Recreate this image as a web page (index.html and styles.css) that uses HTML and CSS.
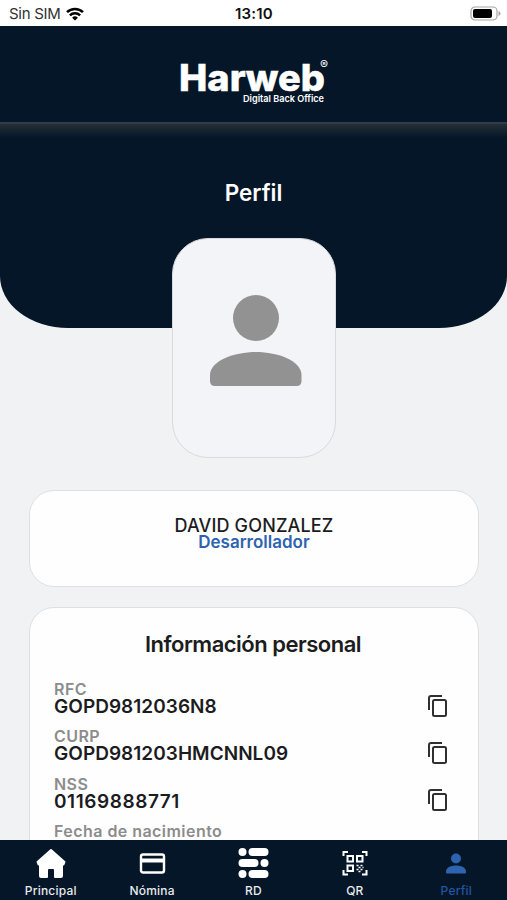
FILE: index.html
```
<!DOCTYPE html>
<html lang="es">
<head>
  <meta charset="UTF-8">
  <meta name="viewport" content="width=device-width, initial-scale=1.0">
  <title>Harweb - Perfil</title>
  <link rel="stylesheet" href="styles.css">
</head>
<body>
  <!-- Status bar -->
  <div class="status-bar">
    <div class="carrier">
      <span>Sin SIM</span>
      <svg class="wifi" viewBox="0 0 18 14" width="18" height="14">
        <g fill="none" stroke="#000" stroke-width="2.5">
          <path d="M1 5.2a11.3 11.3 0 0 1 16 0"/>
          <path d="M3.9 8.3a7.2 7.2 0 0 1 10.2 0"/>
        </g>
        <path d="M9 13.6 6.1 10.7a4.1 4.1 0 0 1 5.8 0z"/>
      </svg>
    </div>
    <span class="clock">13:10</span>
    <svg class="battery" viewBox="0 0 31 15" width="31" height="15">
      <rect x="1" y="1" width="26" height="13" rx="4" fill="none" stroke="#a5a5a5" stroke-width="1.2"/>
      <rect x="3" y="3" width="19" height="9" rx="2"/>
      <path d="M28.5 5v5q2-.8 2-2.5T28.5 5z" fill="#a5a5a5"/>
    </svg>
  </div>

  <!-- Brand -->
  <header class="brand">
    <svg class="logo" viewBox="0 0 152 50" width="152" height="50">
      <text class="logo-name" x="0" y="34" textLength="146" lengthAdjust="spacingAndGlyphs">Harweb</text>
      <text class="logo-mark" x="141" y="12">®</text>
      <text class="logo-tagline" x="64" y="45" textLength="81" lengthAdjust="spacingAndGlyphs">Digital Back Office</text>
    </svg>
  </header>

  <main>
    <section class="hero">
      <h1>Perfil</h1>
    </section>

    <div class="avatar">
      <svg viewBox="0 0 92 92" width="92" height="92" fill="#929292">
        <circle cx="46" cy="23" r="23"/>
        <path d="M0 80C0 66 24 57 46 57s45.500 9 45.500 23v6q0 5-5 5H5q-5 0-5-5z"/>
      </svg>
    </div>

    <section class="card name-card">
      <h2>DAVID GONZALEZ</h2>
      <p>Desarrollador</p>
    </section>

    <section class="card info-card">
      <h3>Información personal</h3>
      <div class="field">
        <div>
          <p class="label">RFC</p>
          <p class="value">GOPD9812036N8</p>
        </div>
        <svg class="copy" viewBox="0 0 19 22" width="19" height="22"><path d="M1 15V3q0-2 2-2h11"/><rect x="5" y="5" width="13" height="16" rx="1.5"/></svg>
      </div>
      <div class="field">
        <div>
          <p class="label">CURP</p>
          <p class="value">GOPD981203HMCNNL09</p>
        </div>
        <svg class="copy" viewBox="0 0 19 22" width="19" height="22"><path d="M1 15V3q0-2 2-2h11"/><rect x="5" y="5" width="13" height="16" rx="1.5"/></svg>
      </div>
      <div class="field">
        <div>
          <p class="label">NSS</p>
          <p class="value nss">01169888771</p>
        </div>
        <svg class="copy" viewBox="0 0 19 22" width="19" height="22"><path d="M1 15V3q0-2 2-2h11"/><rect x="5" y="5" width="13" height="16" rx="1.5"/></svg>
      </div>
      <div class="field">
        <p class="label">Fecha de nacimiento</p>
      </div>
    </section>
  </main>

  <!-- Bottom tabs -->
  <nav class="tabs">
    <a class="tab" href="#">
      <svg viewBox="0 0 32 32" width="32" height="32" fill="#fff" stroke="#fff" stroke-width="2" stroke-linejoin="round">
        <path d="M16 3 2.500 15l1 2.500H5V29q0 1 1 1h6v-7q0-2 2-2h4q2 0 2 2v7h6q1 0 1-1V17.500h1.500l1-2.500z"/>
      </svg>
      <span>Principal</span>
    </a>
    <a class="tab" href="#">
      <svg viewBox="0 0 32 32" width="32" height="32">
        <rect x="5" y="7.500" width="23" height="18" rx="2" fill="none" stroke="#fff" stroke-width="2.400"/>
        <path d="M5 11.500h23v4H5z" fill="#fff"/>
      </svg>
      <span>Nómina</span>
    </a>
    <a class="tab" href="#">
      <svg viewBox="0 0 32 32" width="32" height="32" fill="#fff">
        <circle cx="5.500" cy="5" r="4"/>
        <rect x="11.500" y="1" width="20" height="8" rx="4"/>
        <rect x="1.500" y="12" width="20" height="8" rx="4"/>
        <circle cx="27.500" cy="16" r="4"/>
        <circle cx="5.500" cy="27" r="4"/>
        <rect x="11.500" y="23" width="20" height="8" rx="4"/>
      </svg>
      <span>RD</span>
    </a>
    <a class="tab" href="#">
      <svg viewBox="0 0 32 32" width="32" height="32" fill="none" stroke="#fff" stroke-width="2">
        <path d="M4.500 9V5H9M23 5h4.500v4M27.500 23v4.500H23M9 27.500H4.500V23"/>
        <path d="M8.500 9h5.500v5.500H8.500zM18 9h5.500v5.500H18zM8.500 18.500h5.500V24H8.500z"/>
        <path d="M17.500 18.500h2m2 0h2m-4 2h2m2 0h1m-7 2h2m2 0h2m-4 2h2" stroke-width="1.500"/>
      </svg>
      <span>QR</span>
    </a>
    <a class="tab active" href="#">
      <svg viewBox="0 0 32 32" width="32" height="32" fill="#2e63b0">
        <circle cx="16" cy="11.500" r="5"/>
        <path d="M6 24.500c0-4 5-6 10-6s10 2 10 6v1q0 1-1 1H7q-1 0-1-1z"/>
      </svg>
      <span>Perfil</span>
    </a>
  </nav>
</body>
</html>
```

FILE: styles.css
```
* {
  box-sizing: border-box;
}

body {
  margin: 0;
  height: 900px;
  display: flex;
  flex-direction: column;
  overflow: hidden;
  font-family: Inter, "Liberation Sans", sans-serif;
  background: #f0f2f4;
  color: #1c1c1e;
}

h1, h2, h3, p {
  margin: 0;
}

.status-bar {
  height: 26px;
  flex: none;
  display: grid;
  grid-template-columns: 1fr auto 1fr;
  align-items: center;
  padding: 1px 6px 0 9px;
  background: #fff;
  font-size: 15px;
}

.carrier {
  display: flex;
  align-items: center;
  gap: 6px;
  letter-spacing: -0.3px;
  color: #333;
}

.clock {
  margin-right: 2px;
  font-weight: 600;
  letter-spacing: 0.2px;
  color: #111;
}

.battery {
  justify-self: end;
}

.brand {
  height: 98px;
  flex: none;
  padding: 31px 0 0 179px;
  background: #051628;
  border-bottom: 2px solid #303c4b;
}

.logo {
  display: block;
  overflow: visible;
  fill: #fff;
}

.logo-name {
  font-size: 37px;
  font-weight: 800;
  stroke: #fff;
  stroke-width: 0.5;
}

.logo-mark {
  font-size: 12px;
}

.logo-tagline {
  font-size: 9.5px;
  font-weight: 600;
}

main {
  flex: 1;
  min-height: 0;
  overflow: hidden;
}

.hero {
  height: 204px;
  padding-top: 55px;
  text-align: center;
  color: #fff;
  background: linear-gradient(#242f36, #051628 14px);
  border-radius: 0 0 68px 68px / 0 0 52px 52px;
}

.hero h1 {
  font-size: 22.5px;
  line-height: 28px;
  font-weight: 600;
  letter-spacing: 0;
}

.avatar {
  width: 164px;
  height: 220px;
  margin: -90px auto 32px;
  display: flex;
  justify-content: center;
  padding: 56px 0 0 4px;
  background: #f2f4f8;
  border: 1px solid #d8dadd;
  border-radius: 36px;
}

.card {
  margin: 0 28px 20px 29px;
  background: #fefefe;
  border: 1px solid #dddfe2;
  border-radius: 25px;
}

.name-card {
  height: 97px;
  padding-top: 26px;
  text-align: center;
}

.name-card h2 {
  font-size: 18px;
  line-height: 17px;
  font-weight: 500;
  letter-spacing: 0.15px;
}

.name-card p {
  font-size: 17px;
  line-height: 17px;
  font-weight: 600;
  color: #2e63b0;
}

.info-card {
  height: 320px;
  padding: 22px 31px 0 24px;
}

.info-card h3 {
  margin: 0 -5px 23px 0;
  font-size: 22px;
  line-height: 28px;
  font-weight: 600;
  letter-spacing: -0.5px;
  text-align: center;
}

.field {
  height: 47.3px;
  display: flex;
  justify-content: space-between;
}

.label {
  font-size: 16px;
  line-height: 16px;
  font-weight: 600;
  letter-spacing: 0.45px;
  color: #8c8c8c;
}

.value {
  font-size: 19px;
  line-height: 20px;
  font-weight: 600;
  letter-spacing: 0.03px;
}

.value.nss {
  letter-spacing: 0.57px;
}

.copy {
  margin-top: 13.5px;
  fill: none;
  stroke: #303030;
  stroke-width: 2;
}

.tabs {
  height: 60px;
  flex: none;
  display: grid;
  grid-template-columns: repeat(5, 1fr);
  background: #051628;
}

.tab {
  display: flex;
  flex-direction: column;
  align-items: center;
  padding-top: 7px;
  color: #e8ebee;
  font-size: 12px;
  line-height: 15px;
  font-weight: 500;
  letter-spacing: 0.2px;
  text-decoration: none;
}

.tab span {
  margin-top: 4px;
}

.tab.active {
  color: #2455a0;
}
```
